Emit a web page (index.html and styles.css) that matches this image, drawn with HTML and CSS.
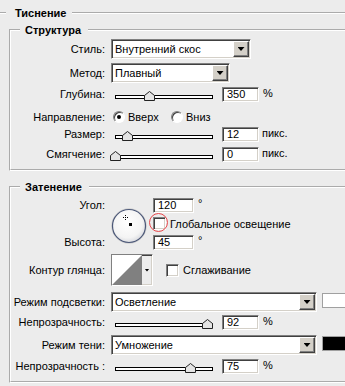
FILE: index.html
```html
<!DOCTYPE html>
<html>
<head>
  <title>Тиснение</title>
  <link rel="stylesheet" href="styles.css">
</head>
<body>
  <fieldset class="group">
    <legend class="group-title">Тиснение</legend>

    <fieldset class="box box-structure">
      <legend class="box-title">Структура</legend>

      <div class="row row-select">
        <span class="label">Стиль:</span>
        <div class="select select-style">
          <span class="select-value">Внутренний скос</span>
          <span class="select-button"><span class="arrow"></span></span>
        </div>
      </div>

      <div class="row row-select gap-4">
        <span class="label">Метод:</span>
        <div class="select select-method">
          <span class="select-value">Плавный</span>
          <span class="select-button"><span class="arrow"></span></span>
        </div>
      </div>

      <div class="row gap-4">
        <span class="label">Глубина:</span>
        <div class="slider">
          <span class="track"></span>
          <svg class="thumb" style="left: 33px" width="11" height="10" viewBox="0 0 11 10"><polygon points="0.5,9.5 0.5,4.5 5.5,0.5 10.5,4.5 10.5,9.5" /></svg>
        </div>
        <span class="field">350</span>
        <span class="unit">%</span>
      </div>

      <div class="row row-radio gap-7">
        <span class="label">Направление:</span>
        <label class="radio"><span class="radio-mark checked"></span>Вверх</label>
        <label class="radio"><span class="radio-mark"></span>Вниз</label>
      </div>

      <div class="row gap-2">
        <span class="label">Размер:</span>
        <div class="slider">
          <span class="track"></span>
          <svg class="thumb" style="left: 11px" width="11" height="10" viewBox="0 0 11 10"><polygon points="0.5,9.5 0.5,4.5 5.5,0.5 10.5,4.5 10.5,9.5" /></svg>
        </div>
        <span class="field">12</span>
        <span class="unit unit-px">пикс.</span>
      </div>

      <div class="row gap-5">
        <span class="label">Смягчение:</span>
        <div class="slider">
          <span class="track"></span>
          <svg class="thumb" style="left: -1px" width="11" height="10" viewBox="0 0 11 10"><polygon points="0.5,9.5 0.5,4.5 5.5,0.5 10.5,4.5 10.5,9.5" /></svg>
        </div>
        <span class="field">0</span>
        <span class="unit unit-px">пикс.</span>
      </div>
    </fieldset>

    <fieldset class="box box-shading">
      <legend class="box-title">Затенение</legend>

      <div class="angle">
        <span class="label label-angle">Угол:</span>
        <svg class="dial" width="36" height="36" viewBox="0 0 36 36">
          <defs>
            <radialGradient id="dialFill" cx="0.45" cy="0.4" r="0.65">
              <stop offset="0" stop-color="#ffffff" />
              <stop offset="0.7" stop-color="#f4f4f4" />
              <stop offset="1" stop-color="#d2d4da" />
            </radialGradient>
          </defs>
          <circle cx="18" cy="18" r="17.3" fill="none" stroke="#d0d0d0" stroke-width="1" />
          <circle cx="18" cy="18" r="16.5" fill="url(#dialFill)" stroke="#4c5878" stroke-width="1.2" />
          <rect x="14" y="7" width="1" height="1" />
          <rect x="14" y="11" width="1" height="1" />
          <rect x="12" y="9" width="1" height="1" />
          <rect x="16" y="9" width="1" height="1" />
          <rect x="14" y="9" width="1" height="1" />
          <rect x="18" y="15" width="3" height="3" />
        </svg>
        <div class="angle-value">
          <span class="field field-angle">120</span>
          <span class="unit unit-deg">°</span>
        </div>
        <label class="check-row check-global">
          <span class="check marked"></span>Глобальное освещение
        </label>
        <span class="label label-height">Высота:</span>
        <div class="angle-value angle-height">
          <span class="field field-angle">45</span>
          <span class="unit unit-deg">°</span>
        </div>
      </div>

      <div class="row row-contour gap-4">
        <span class="label">Контур глянца:</span>
        <div class="contour">
          <svg width="30" height="30" viewBox="0 0 30 30">
            <rect width="30" height="30" fill="#fff" />
            <polygon points="0,30 30,0 30,30" fill="#808080" />
          </svg>
          <span class="contour-button"><span class="arrow arrow-small"></span></span>
        </div>
        <label class="check-row check-smooth">
          <span class="check"></span>Сглаживание
        </label>
      </div>

      <div class="row row-select gap-6">
        <span class="label">Режим подсветки:</span>
        <div class="select select-mode">
          <span class="select-value">Осветление</span>
          <span class="select-button"><span class="arrow"></span></span>
        </div>
        <span class="swatch swatch-light"></span>
      </div>

      <div class="row gap-3">
        <span class="label">Непрозрачность:</span>
        <div class="slider">
          <span class="track"></span>
          <svg class="thumb" style="left: 91px" width="11" height="10" viewBox="0 0 11 10"><polygon points="0.5,9.5 0.5,4.5 5.5,0.5 10.5,4.5 10.5,9.5" /></svg>
        </div>
        <span class="field">92</span>
        <span class="unit">%</span>
      </div>

      <div class="row row-select gap-5">
        <span class="label">Режим тени:</span>
        <div class="select select-mode">
          <span class="select-value">Умножение</span>
          <span class="select-button"><span class="arrow"></span></span>
        </div>
        <span class="swatch swatch-dark"></span>
      </div>

      <div class="row gap-4">
        <span class="label">Непрозрачность :</span>
        <div class="slider">
          <span class="track"></span>
          <svg class="thumb" style="left: 74px" width="11" height="10" viewBox="0 0 11 10"><polygon points="0.5,9.5 0.5,4.5 5.5,0.5 10.5,4.5 10.5,9.5" /></svg>
        </div>
        <span class="field">75</span>
        <span class="unit">%</span>
      </div>
    </fieldset>
  </fieldset>
</body>
</html>
```

FILE: styles.css
```css
body {
  margin: 0;
  width: 345px;
  height: 386px;
  overflow: hidden;
  background-color: #ececec;
  color: #000;
  font-family: "Liberation Sans", Arial, sans-serif;
  font-size: 11px;
}

fieldset {
  margin: 0;
  padding: 0;
  min-width: 0;
}

legend {
  padding: 0;
  font-weight: bold;
  line-height: 14px;
}

/* outer group, only the top line is visible in the window */
.group {
  margin-top: 6px;
  width: 345px;
  box-sizing: border-box;
  border: none;
  border-top: 2px groove #fff;
}

.group-title {
  margin-left: 6px;
  padding: 0 6px 0 9px;
}

/* the right edge of the boxes is cut off by the window */
.box {
  margin: 3px 0 0 9px;
  width: 336px;
  box-sizing: border-box;
  border: 2px groove #fff;
  border-right: none;
  padding: 2px 0 7px;
}

.box-title {
  margin-left: 9px;
  padding: 0 7px 0 5px;
}

.box-shading {
  margin-top: 9px;
  padding-top: 4px;
}

.row {
  display: flex;
  align-items: center;
  height: 15px;
}

.row-select {
  height: 20px;
}

.row-radio {
  height: 16px;
}

.row-contour {
  height: 32px;
}

.gap-2 { margin-top: 2px; }
.gap-3 { margin-top: 3px; }
.gap-4 { margin-top: 4px; }
.gap-5 { margin-top: 5px; }
.gap-6 { margin-top: 6px; }
.gap-7 { margin-top: 7px; }

.label {
  flex: none;
  width: 94px;
  margin-right: 6px;
  text-align: right;
  white-space: nowrap;
  line-height: 15px;
}

/* sunken controls */
.select,
.field,
.contour {
  box-sizing: border-box;
  border: 1px solid;
  border-color: #808080 #fff #fff #808080;
  box-shadow: inset 1px 1px 0 #404040, inset -1px -1px 0 #d4d0c8;
}

.select {
  display: flex;
  flex: none;
  height: 20px;
  padding: 1px;
  background-color: #fff;
}

.select-style { width: 140px; }
.select-method { width: 119px; }
.select-mode { width: 206px; }

.select-value {
  flex: 1;
  padding-left: 2px;
  line-height: 16px;
  white-space: nowrap;
}

.select-button {
  display: flex;
  align-items: center;
  justify-content: center;
  box-sizing: border-box;
  width: 16px;
  background-color: #d4d0c8;
  border: 1px solid;
  border-color: #fff #404040 #404040 #fff;
  box-shadow: inset -1px -1px 0 #808080;
}

.arrow {
  width: 7px;
  height: 4px;
  background-color: #000;
  clip-path: polygon(0 0, 100% 0, 50% 100%);
}

.arrow-small {
  width: 5px;
  height: 3px;
}

.field {
  width: 37px;
  height: 15px;
  padding-left: 4px;
  background-color: #fff;
  line-height: 13px;
}

.field-angle {
  width: 41px;
}

.unit {
  margin-left: 4px;
  align-self: flex-start;
  line-height: 13px;
}

.unit-px {
  margin-left: 3px;
}

.unit-deg {
  margin-top: -1px;
}

/* slider */
.slider {
  position: relative;
  flex: none;
  width: 108px;
  height: 15px;
  margin-right: 3px;
  padding-left: 4px;
  box-sizing: border-box;
}

.track {
  display: block;
  width: 98px;
  height: 4px;
  margin-top: 8px;
  box-sizing: border-box;
  border: 1px solid #000;
  background-color: #fff;
}

.thumb {
  position: absolute;
  top: 4px;
}

.thumb polygon {
  fill: #e4e4e4;
  stroke: #222;
  stroke-width: 1;
}

/* radio buttons */
.radio {
  display: flex;
  align-items: center;
  width: 58px;
  gap: 3px;
}

.radio:first-of-type {
  margin-left: 2px;
}

.radio-mark {
  position: relative;
  box-sizing: border-box;
  width: 12px;
  height: 12px;
  border: 1px solid;
  border-color: #808080 #fff #fff #808080;
  border-radius: 50%;
  background-color: #fff;
  box-shadow: inset 1px 1px 0 #404040;
}

.radio-mark.checked::after {
  content: "";
  position: absolute;
  top: 3px;
  left: 3px;
  width: 4px;
  height: 4px;
  border-radius: 50%;
  background-color: #000;
}

/* checkboxes */
.check-row {
  display: flex;
  align-items: center;
  gap: 4px;
  white-space: nowrap;
}

.check {
  position: relative;
  flex: none;
  box-sizing: border-box;
  width: 13px;
  height: 13px;
  border: 1px solid;
  border-color: #808080 #fff #fff #808080;
  background-color: #fff;
  box-shadow: inset 1px 1px 0 #404040, inset -1px -1px 0 #d4d0c8;
}

/* red highlight drawn over the checkbox */
.check.marked::after {
  content: "";
  position: absolute;
  left: -5px;
  top: -5px;
  width: 17px;
  height: 17px;
  border: 1px solid #e8484c;
  border-radius: 50%;
}

/* angle / altitude block */
.angle {
  display: grid;
  grid-template-columns: 100px 42px auto;
  grid-template-rows: 15px 22px 15px;
}

.label-angle {
  grid-column: 1;
  grid-row: 1;
}

.label-height {
  grid-column: 1;
  grid-row: 3;
}

.dial {
  grid-column: 2;
  grid-row: 1 / 4;
  margin-top: 10px;
}

.angle-value {
  grid-column: 3;
  grid-row: 1;
  display: flex;
}

.angle-height {
  grid-row: 3;
}

.check-global {
  grid-column: 3;
  grid-row: 2;
  align-self: start;
  margin-top: 4px;
}

/* gloss contour picker */
.contour {
  display: flex;
  flex: none;
  width: 42px;
  height: 32px;
  background-color: #ececec;
}

.contour svg {
  display: block;
}

.contour-button {
  display: flex;
  flex: 1;
  align-items: center;
  justify-content: center;
}

.check-smooth {
  margin-left: 13px;
}

.swatch {
  align-self: flex-start;
  flex: 1;
  margin: 1px 0 0 5px;
  height: 15px;
  box-sizing: border-box;
  border: 1px solid #a0a0a0;
  border-right: none;
}

.swatch-light {
  background-color: #fff;
}

.swatch-dark {
  background-color: #000;
}
```
